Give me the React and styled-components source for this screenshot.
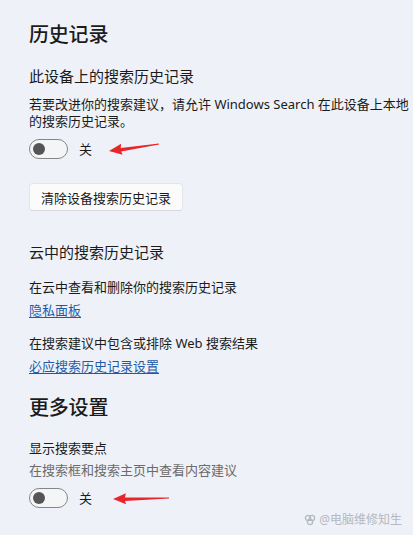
import React from 'react';
import styled, { createGlobalStyle } from 'styled-components';

const GlobalStyle = createGlobalStyle`
    html, body {
        margin: 0;
        padding: 0;
        background: #eef2f8;
        overflow: hidden;
    }
    body {
        font-family: "Noto Sans", "Noto Sans CJK SC", sans-serif;
        color: #1b1b1b;
    }
`;

const Page = styled.div`
    position: relative;
    width: 413px;
    height: 535px;
    box-sizing: border-box;
    padding: 21px 0 0 29px;
    display: flex;
    flex-direction: column;
    align-items: flex-start;
`;

const SectionTitle = styled.h2`
    margin: ${p => p.$top || 0}px 0 0;
    font-size: 20px;
    line-height: 28px;
    font-weight: 500;
    letter-spacing: -0.2px;
`;

const SettingLabel = styled.div`
    margin-top: ${p => p.$top || 0}px;
    font-size: 15px;
    line-height: 22px;
`;

const Text = styled.div`
    margin-top: ${p => p.$top || 0}px;
    font-size: 13px;
    line-height: ${p => p.$line || 20}px;
    color: ${p => (p.$muted ? '#6b6b6b' : '#1b1b1b')};
    white-space: nowrap;
`;

const Link = styled.a`
    margin-top: ${p => p.$top || 0}px;
    font-size: 13px;
    line-height: 20px;
    color: #1f5aa8;
    text-decoration: underline;
    text-underline-offset: 2px;
    cursor: pointer;
`;

const ToggleRow = styled.div`
    margin-top: ${p => p.$top || 0}px;
    display: flex;
    align-items: center;
    height: 20px;
`;

const Toggle = styled.span`
    box-sizing: border-box;
    width: 39px;
    height: 20px;
    border: 1px solid #858585;
    border-radius: 10px;
    background: #f4f5f7;
    display: flex;
    align-items: center;
    padding-left: 3px;
`;

const Knob = styled.span`
    width: 12px;
    height: 12px;
    border-radius: 50%;
    background: #555;
`;

const StateText = styled.span`
    margin-left: 11px;
    font-size: 13px;
    line-height: 20px;
`;

const ArrowBox = styled.div`
    margin-left: ${p => p.$gap}px;
    display: block;
    line-height: 0;
`;

const Button = styled.button`
    margin-top: ${p => p.$top || 0}px;
    height: 28px;
    padding: 0 11px;
    border: 1px solid #e3e5e9;
    border-bottom-color: #d6d8dc;
    border-radius: 4px;
    background: #fbfbfc;
    font-family: inherit;
    font-size: 13px;
    color: #1b1b1b;
`;

const Watermark = styled.div`
    position: absolute;
    right: 11px;
    bottom: 6px;
    display: flex;
    align-items: center;
    gap: 3px;
    font-size: 12px;
    line-height: 18px;
    color: #b4b8bf;
`;

const RedArrow = ({ width, height, tail, tip }) => {
    // shaft tapers from a thin tail to the wider arrow head
    const [tx, ty] = tail;
    const [hx, hy] = tip;
    const dx = tx - hx, dy = ty - hy;
    const len = Math.hypot(dx, dy);
    const ux = dx / len, uy = dy / len;
    const nx = -uy, ny = ux;
    const headLen = 13, headW = 5.5, neck = 2.2;
    const bx = hx + ux * headLen, by = hy + uy * headLen;
    const pts = [
        [hx, hy],
        [bx + nx * headW, by + ny * headW],
        [bx - ux + nx * neck, by - uy + ny * neck],
        [tx + nx * 0.4, ty + ny * 0.4],
        [tx - nx * 0.4, ty - ny * 0.4],
        [bx - ux - nx * neck * 0.6, by - uy - ny * neck * 0.6],
        [bx - nx * headW, by - ny * headW],
    ];
    return (
        <svg width={width} height={height}>
            <polygon points={pts.map(p => p.join(',')).join(' ')} fill="#e8262a" />
        </svg>
    );
};

const OffSwitch = ({ top, arrow }) => (
    <ToggleRow $top={top}>
        <Toggle><Knob /></Toggle>
        <StateText>关</StateText>
        <ArrowBox $gap={arrow.gap}>
            <RedArrow {...arrow} />
        </ArrowBox>
    </ToggleRow>
);

const App = () => (
    <>
        <GlobalStyle />
        <Page>
            <SectionTitle>历史记录</SectionTitle>
            <SettingLabel $top={16}>此设备上的搜索历史记录</SettingLabel>
            <Text $top={9} $line={17}>若要改进你的搜索建议，请允许 Windows Search 在此设备上本地</Text>
            <Text $line={17}>的搜索历史记录。</Text>
            <OffSwitch
                top={9}
                arrow={{ gap: 16, width: 52, height: 16, tail: [51, 3], tip: [1, 10] }}
            />
            <Button $top={24}>清除设备搜索历史记录</Button>

            <SettingLabel $top={30}>云中的搜索历史记录</SettingLabel>
            <Text $top={14}>在云中查看和删除你的搜索历史记录</Text>
            <Link $top={3}>隐私面板</Link>
            <Text $top={13}>在搜索建议中包含或排除 Web 搜索结果</Text>
            <Link $top={3}>必应搜索历史记录设置</Link>

            <SectionTitle $top={18}>更多设置</SectionTitle>
            <Text $top={16}>显示搜索要点</Text>
            <Text $top={2} $muted>在搜索框和搜索主页中查看内容建议</Text>
            <OffSwitch
                top={8}
                arrow={{ gap: 20, width: 58, height: 16, tail: [57, 8], tip: [1, 9] }}
            />

            <Watermark>
                <svg width="12" height="12" viewBox="0 0 12 12">
                    <circle cx="4" cy="4" r="2.6" fill="none" stroke="#b4b8bf" strokeWidth="1.3" />
                    <circle cx="8" cy="4" r="2.6" fill="none" stroke="#b4b8bf" strokeWidth="1.3" />
                    <circle cx="6" cy="8" r="2.6" fill="none" stroke="#b4b8bf" strokeWidth="1.3" />
                </svg>
                <span>@电脑维修知生</span>
            </Watermark>
        </Page>
    </>
);

export default App;
